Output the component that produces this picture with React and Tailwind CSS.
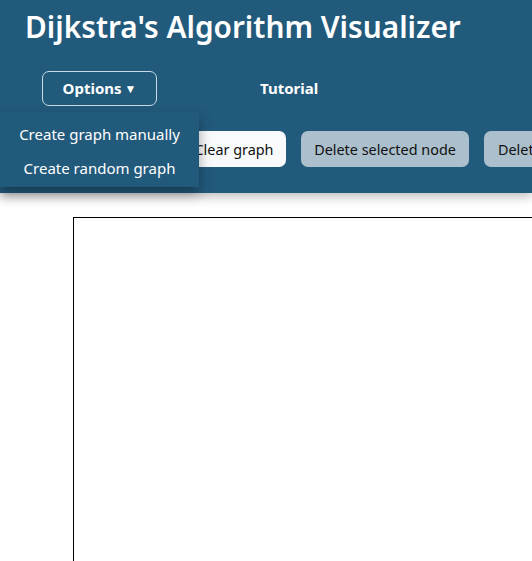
export default function App() {
  const font = { fontFamily: '"Noto Sans", "Open Sans", sans-serif' };
  return (
    <div className="relative w-[532px] h-[561px] overflow-hidden bg-white" style={font}>
      <header className="relative z-10 h-[193px] bg-[#225a7c] shadow-[0_4px_10px_rgba(0,0,0,0.25)]">
        <h1 className="pl-[25px] pt-[8px] text-[29.8px] leading-[38px] font-semibold text-white whitespace-nowrap">
          Dijkstra's Algorithm Visualizer
        </h1>
        <nav className="relative mt-[25px] flex items-center h-[35px]">
          <button className="shrink-0 ml-[42px] w-[115px] h-[35px] rounded-[7px] border border-[#c9dbe8] text-white text-[15px] font-bold flex items-center justify-center gap-[3px]">
            Options <span className="text-[12px]">▼</span>
          </button>
          <span className="shrink-0 ml-[103px] text-white text-[15px] font-bold">Tutorial</span>
          <div className="absolute left-0 top-[41px] w-[199px] bg-[#225a7c] pt-[5px] pb-[2px] shadow-[0_6px_12px_rgba(0,0,0,0.35)] z-20">
            <div className="h-[34px] flex items-center justify-center text-white text-[15px] whitespace-nowrap">Create graph manually</div>
            <div className="h-[34px] flex items-center justify-center text-white text-[15px] whitespace-nowrap">Create random graph</div>
          </div>
        </nav>
        <div className="mt-[25px] flex gap-[15px] pl-[182px] whitespace-nowrap">
          <button className="shrink-0 h-[36px] w-[104px] rounded-[7px] bg-[#f8fafc] text-[#111] text-[14.4px] pt-[1px]">Clear graph</button>
          <button className="shrink-0 h-[36px] w-[168px] rounded-[7px] bg-[#abbfcc] text-[#111] text-[14.4px] pt-[1px]">Delete selected node</button>
          <button className="shrink-0 h-[36px] px-[14px] rounded-[7px] bg-[#abbfcc] text-[#111] text-[14.4px] pt-[1px]">Delete selected edge</button>
        </div>
      </header>
      <div className="ml-[73px] mt-[24px] w-[800px] h-[600px] border border-black bg-white" />
    </div>
  );
}
